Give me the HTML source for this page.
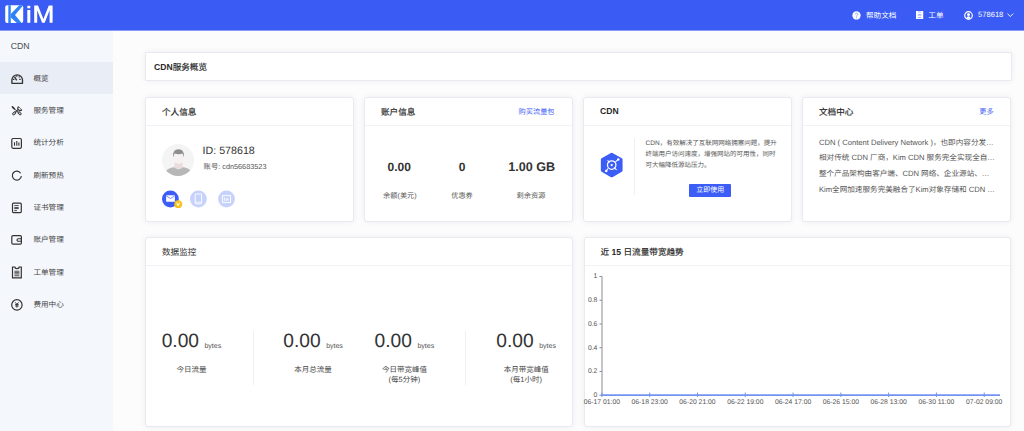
<!DOCTYPE html>
<html lang="zh-CN"><head><meta charset="utf-8">
<style>
*{margin:0;padding:0;box-sizing:border-box}
html,body{width:1024px;height:431px;overflow:hidden}
body{text-rendering:geometricPrecision;font-family:"Liberation Sans",sans-serif;background:#fcfcfd;position:relative;color:#333}
.abs{position:absolute}
.hdr{position:absolute;left:0;top:0;width:1024px;height:30px;background:#3a5cf4;box-shadow:0 1px 0 rgba(58,92,244,.6);z-index:5}
.side{position:absolute;left:0;top:30px;width:113px;height:401px;background:#f4f7fc}
.card{position:absolute;background:#fff;border:1px solid #e8eaf0;border-radius:3px;box-shadow:0 0 7px rgba(30,40,60,.06)}
.ct{position:absolute;left:16px;top:.5px;height:27px;line-height:27px;font-size:8.6px;font-weight:normal;-webkit-text-stroke:.18px #2a2a2a;color:#2a2a2a;white-space:nowrap}
.cdiv{position:absolute;left:0;right:0;top:26.8px;height:1px;background:#f0f2f6}
.mi{position:absolute;left:0;width:113px;height:32px}
.mi .t{position:absolute;left:33.4px;top:0.8px;line-height:32px;font-size:7.6px;color:#444;white-space:nowrap}
.mi svg{position:absolute;left:10px;top:9px}
.hw{color:#fff;font-size:7.6px;white-space:nowrap}
.doc{width:176px;font-size:7.6px;line-height:10px;color:#555;white-space:nowrap;overflow:hidden;text-overflow:ellipsis}
.big{text-align:center;white-space:nowrap;color:#333;line-height:22px}
.big .n{font-size:19.2px}
.big .u{font-size:7px;color:#555;margin-left:1px;position:relative;top:.4px}
.lab{text-align:center;font-size:7.5px;line-height:9.5px;color:#444;white-space:nowrap}
b{font-weight:bold;-webkit-text-stroke:0}
.link{color:#3d5cf5;font-size:7.2px}
</style></head><body>

<div class="hdr">
  <svg class="abs" style="left:0;top:0" width="60" height="30" viewBox="0 0 60 30">
    <rect x="5.2" y="5.2" width="18" height="17.8" rx="2" fill="#fff"/>
    <path d="M8.3 5.2h2.5v17.8h-2.5z" fill="#2e82f6"/>
    <path d="M10.8 14L19.2 5.2h4.1L15 15l6.6 8h-4.8l-6-5.6z" fill="#2e82f6"/>
    <rect x="27.3" y="5.8" width="3" height="2.5" fill="#fff"/>
    <rect x="27.3" y="10" width="3" height="12.8" fill="#fff"/>
    <path d="M34.2 22.8V5.5h3.8l5.4 13.6 5.4-13.6h3.8v17.3h-3V10.2l-4.9 12.6h-2.6l-4.9-12.6v12.6z" fill="#fff"/>
  </svg>
  <svg class="abs" style="left:851.7px;top:10.5px" width="9" height="9" viewBox="0 0 9 9"><circle cx="4.5" cy="4.45" r="4.15" fill="#fff"/><path d="M3.3 3.3a1.25 1.25 0 1 1 1.9 1.1c-.45.3-.65.5-.65.95v.25" stroke="#7d95f6" stroke-width=".9" fill="none"/><circle cx="4.55" cy="6.7" r=".5" fill="#7d95f6"/></svg>
  <div class="abs hw" style="left:866px;top:9.6px;line-height:12px">帮助文档</div>
  <svg class="abs" style="left:916px;top:10.8px" width="8" height="8" viewBox="0 0 8 8"><rect x="0" y="0" width="7.2" height="8" fill="#fff"/><rect x="1.8" y=".6" width="3.6" height=".7" fill="#8aa0f7"/><rect x="1.8" y="3.3" width="3.6" height="1.2" fill="#8aa0f7"/><rect x="1.8" y="5.9" width="3.6" height=".8" fill="#8aa0f7"/></svg>
  <div class="abs hw" style="left:928.3px;top:9.6px;line-height:12px">工单</div>
  <svg class="abs" style="left:963.5px;top:10.5px" width="9" height="9" viewBox="0 0 9 9"><circle cx="4.5" cy="4.5" r="3.8" stroke="#fff" stroke-width="1.2" fill="none"/><circle cx="4.5" cy="3.5" r="1.5" fill="#fff"/><path d="M2.2 7.8c.2-1.8 1.1-2.6 2.3-2.6s2.1.8 2.3 2.6z" fill="#fff"/></svg>
  <div class="abs hw" style="left:978px;top:8.6px;line-height:12px">578618</div>
  <svg class="abs" style="left:1007.3px;top:12.6px" width="8" height="5" viewBox="0 0 8 5"><path d="M.5.6L3.3 3.6 6.2.6" stroke="#fff" stroke-width=".9" fill="none"/></svg>
</div>

<div class="side">
  <div class="abs" style="left:10.8px;top:9.6px;font-size:8.7px;line-height:12px;color:#4a4a4a">CDN</div>
  <div class="abs" style="left:0;top:31.5px;width:102px;height:1px;background:#edf0f6"></div>
</div>
<div class="mi" style="top:62px;background:#e9edf6"></div>
<div class="mi" style="top:62.00px"><div class="t">概览</div></div>
<div class="mi" style="top:94.33px"><div class="t">服务管理</div></div>
<div class="mi" style="top:126.66px"><div class="t">统计分析</div></div>
<div class="mi" style="top:158.99px"><div class="t">刷新预热</div></div>
<div class="mi" style="top:191.32px"><div class="t">证书管理</div></div>
<div class="mi" style="top:223.65px"><div class="t">账户管理</div></div>
<div class="mi" style="top:255.98px"><div class="t">工单管理</div></div>
<div class="mi" style="top:288.31px"><div class="t">费用中心</div></div>
<svg class="abs" style="left:0;top:0" width="113" height="431" viewBox="0 0 113 431" fill="none" stroke="#333" stroke-width="1.2">
 <path d="M11.9 83.3V80.1a5.3 5.3 0 0 1 10.6 0v3.2z" stroke-width="1.35" stroke-linejoin="round"/>
 <path d="M16.8 75.3v1.5M12.9 79.3h1.5M19.2 79.3h1.5M19.6 76.4l-.9.9" stroke-width="1.2"/>
 <path d="M14.5 76.6l2.2 3.8" stroke-width="1.4"/>
 <path d="M12.4 106.9l2 2" stroke-width="1.6" stroke-linecap="round"/>
 <path d="M14.4 108.9l3.6 3.2" stroke-width=".9"/>
 <rect x="-.9" y="-1.7" width="1.8" height="3.4" rx=".5" transform="translate(19.6 113.3) rotate(-45)" stroke-width=".95"/>
 <rect x="-.9" y="-1.7" width="1.8" height="3.4" rx=".5" transform="translate(14.2 113.3) rotate(45)" stroke-width=".95"/>
 <path d="M15.6 111.9l2.6-2.6" stroke-width="1.1"/>
 <path d="M18.5 106.6a2.3 2.3 0 1 0 3.3 3.2" stroke-width="1.2"/>
 <path d="M18.5 106.6l1.2 1.6M21.8 109.8l-1.6-1.2" stroke-width="1"/>
 <rect x="11.8" y="138.5" width="9.6" height="9.8" rx="1.2"/>
 <path d="M14.5 142.3v3.5M16.8 141.1v4.7M18.9 142.5v3.3" stroke-width="1.1"/>
 <path d="M20.6 173.2A4.5 4.5 0 1 0 21.3 176" />
 <rect x="12.5" y="203.2" width="8.8" height="9.4" rx="1"/>
 <path d="M14.3 205.6h4.4M14.3 207.6h4.4M14.3 208.6h4.4M14.3 210.6h2.6" stroke-width=".9"/>
 <rect x="11.8" y="235.6" width="9.6" height="8.6" rx="1.2"/>
 <path d="M21.4 238.8h-3.2a1.2 1.2 0 0 0 0 2.4h3.2" stroke-width="1.1"/>
 <path d="M12.5 267h2.4a2.1 1.6 0 0 0 4.2 0h2.2v10.9h-8.8z"/>
 <path d="M14.4 271.2h5M14.4 272.7h5M14.4 274h5M14.4 275.8h5" stroke-width=".9"/>
 <circle cx="16.9" cy="304.9" r="5.2"/>
 <path d="M15.3 302.4l1.6 2 1.6-2M15.2 304.6h3.4M15.2 306h3.4M16.9 304.4v3.2" stroke-width="1"/>
</svg>



<!-- top card -->
<div class="card" style="left:145px;top:52px;width:867px;height:29px;border-radius:1px">
  <div class="abs" style="left:8px;top:.7px;line-height:27px;font-size:8.6px;font-weight:normal;-webkit-text-stroke:.18px #2a2a2a;color:#2a2a2a"><b>CDN</b>服务概览</div>
</div>

<!-- card 1 -->
<div class="card" style="left:145px;top:97px;width:209px;height:125px">
  <div class="ct">个人信息</div><div class="cdiv"></div>
  <div class="abs" style="left:16px;top:45.5px;width:32.4px;height:32.4px;border-radius:50%;background:#f4f4f4;overflow:hidden">
    <svg width="33" height="33" viewBox="0 0 33 33">
      <path d="M2 30.5c2.4-6 7-7.4 14.5-7.4s12.1 1.4 14.5 7.4v3H2z" fill="#b7b7b7"/>
      <path d="M12.4 18.5v4.8c1.2 1.4 2.6 2.1 4.1 2.1s2.9-.7 4.1-2.1v-4.8z" fill="#e8dcdc"/>
      <ellipse cx="16.5" cy="13.4" rx="5" ry="6.6" fill="#f7f0f0"/>
      <path d="M11.2 13.6c-.9-5.2 1.4-8.3 5.3-8.3s6.2 3.1 5.3 8.3c-.4-2.2-.9-3.4-1.5-4-1.7.7-5.1.7-7.6 0-.6.6-1.1 1.8-1.5 4z" fill="#8e8e8e"/>
    </svg>
  </div>
  <div class="abs" style="left:56.6px;top:46.6px;font-size:10.67px;line-height:12px;color:#333;white-space:nowrap">ID: 578618</div>
  <div class="abs" style="left:57.6px;top:64.3px;font-size:7.3px;line-height:10px;color:#555;white-space:nowrap">账号: cdn56683523</div>
  <svg class="abs" style="left:16px;top:91.6px" width="75" height="19" viewBox="0 0 75 19">
    <circle cx="8.4" cy="9" r="8.4" fill="#3c5ef6"/>
    <rect x="4.1" y="5.2" width="8.8" height="6.6" rx=".5" fill="#fff"/>
    <path d="M4.3 5.9l4.2 2.6 4.2-2.6" stroke="#3a5cf4" stroke-width=".7" fill="none"/>
    <circle cx="16.2" cy="14.2" r="3.9" fill="#f8c21a"/>
    <path d="M14.7 12.6l1.5 3.3 1.5-3.3" stroke="#fff" stroke-width="1" fill="none"/>
    <circle cx="36.4" cy="9" r="8.4" fill="#c7d2fb"/>
    <rect x="33.2" y="4" width="6.4" height="9.8" rx=".6" stroke="#fff" stroke-width=".9" fill="none"/>
    <path d="M33.2 12.2h6.4" stroke="#fff" stroke-width=".8"/>
    <circle cx="64.5" cy="9" r="8.4" fill="#c7d2fb"/>
    <rect x="60.4" y="5.6" width="8.2" height="6.9" stroke="#fff" stroke-width=".9" fill="none"/>
    <path d="M62.4 7.5v3.4M64.3 8.6v2.3M64.3 8.8h1.8v2.1" stroke="#fff" stroke-width=".9" fill="none"/>
  </svg>
</div>

<!-- card 2 -->
<div class="card" style="left:364px;top:97px;width:209px;height:125px">
  <div class="ct">账户信息</div><div class="cdiv"></div>
  <div class="abs link" style="left:153.6px;top:7.8px;line-height:12px">购买流量包</div>
    <div class="abs" style="left:16.7px;top:62px;width:35px;text-align:center;font-size:12px;font-weight:bold;line-height:14px;color:#333">0.00</div>
  <div class="abs" style="left:17.4px;top:93px;width:35px;text-align:center;font-size:7.2px;line-height:10px;color:#555;white-space:nowrap">余额(美元)</div>
  <div class="abs" style="left:86px;top:62px;width:22px;text-align:center;font-size:12px;font-weight:bold;line-height:14px;color:#333">0</div>
  <div class="abs" style="left:86px;top:93px;width:22px;text-align:center;font-size:7.2px;line-height:10px;color:#555;white-space:nowrap">优惠券</div>
  <div class="abs" style="left:142.6px;top:62px;width:48px;text-align:center;font-size:12.6px;font-weight:bold;line-height:14px;color:#333;white-space:nowrap">1.00 GB</div>
  <div class="abs" style="left:142px;top:93px;width:48px;text-align:center;font-size:7.2px;line-height:10px;color:#555;white-space:nowrap">剩余资源</div>
</div>

<!-- card 3 -->
<div class="card" style="left:583px;top:97px;width:209px;height:125px">
  <div class="ct" style="top:-.2px"><b>CDN</b></div><div class="cdiv"></div>
  <svg class="abs" style="left:15.8px;top:54.4px" width="25" height="27" viewBox="0 0 26 28">
    <polygon points="12.17,2.32 21.87,7.92 21.87,19.12 12.17,24.72 2.47,19.12 2.47,7.92" fill="#3c5ef6" stroke="#3c5ef6" stroke-width="3.2" stroke-linejoin="round"/>
    <circle cx="12.17" cy="13.52" r="4.4" stroke="#fff" stroke-width="1.3" fill="none"/>
    <circle cx="12.17" cy="13.52" r="1.2" fill="#fff"/>
    <path d="M19 7.7L16.1 10.2M8.2 17.1L6.5 19.8M7.8 8.6l2.3 2.2M14.4 16.1l2.9 2.4" stroke="#fff" stroke-width="1.1"/>
    <circle cx="19" cy="7.7" r="1.3" fill="#fff"/><circle cx="6.5" cy="19.8" r="1.3" fill="#fff"/>
  </svg>
  <div class="abs" style="left:49.6px;top:39.5px;width:1px;height:57px;background:#eef0f4"></div>
  <div class="abs" style="left:61.6px;top:40px;width:140px;font-size:6.5px;line-height:11.1px;color:#555;white-space:nowrap">CDN，有效解决了互联网网络拥塞问题，提升<br>终端用户访问速度，增强网站的可用性，同时<br>可大幅降低源站压力。</div>
  <div class="abs" style="left:105.3px;top:85.8px;width:42px;height:13px;background:#3c5ef6;border-radius:1px;color:#fff;font-size:7px;line-height:13px;text-align:center">立即使用</div>
</div>

<!-- card 4 -->
<div class="card" style="left:802px;top:97px;width:209px;height:125px">
  <div class="ct">文档中心</div><div class="cdiv"></div>
  <div class="abs link" style="left:176.2px;top:7.8px;line-height:12px">更多</div>
  <div class="abs doc" style="left:16px;top:39.5px">CDN ( Content Delivery Network )，也即内容分发网络</div>
  <div class="abs doc" style="left:16px;top:55.2px">相对传统 CDN 厂商，Kim CDN 服务完全实现全自动化</div>
  <div class="abs doc" style="left:16px;top:70.9px">整个产品架构由客户端、CDN 网络、企业源站、数据中心四大部分组成</div>
  <div class="abs doc" style="left:16px;top:86.6px">Kim全网加速服务完美融合了Kim对象存储和 CDN 服务</div>
</div>

<!-- row 2 card 1 -->
<div class="card" style="left:145px;top:237px;width:428px;height:190px">
  <div class="ct" style="-webkit-text-stroke:0;color:#333">数据监控</div><div class="cdiv"></div>
  <div class="abs" style="left:107px;top:93px;width:1px;height:54px;background:#eef0f4"></div>
  <div class="abs" style="left:319px;top:93px;width:1px;height:54px;background:#eef0f4"></div>
  <div class="abs big" style="left:-14.60px;top:93.2px;width:120px"><span class="n">0.00</span> <span class="u">bytes</span></div>
  <div class="abs lab" style="left:-14.60px;top:127px;width:120px">今日流量</div>
  <div class="abs big" style="left:107.10px;top:93.2px;width:120px"><span class="n">0.00</span> <span class="u">bytes</span></div>
  <div class="abs lab" style="left:107.10px;top:127px;width:120px">本月总流量</div>
  <div class="abs big" style="left:198.40px;top:93.2px;width:120px"><span class="n">0.00</span> <span class="u">bytes</span></div>
  <div class="abs lab" style="left:198.40px;top:127px;width:120px">今日带宽峰值<br>(每5分钟)</div>
  <div class="abs big" style="left:320.15px;top:93.2px;width:120px"><span class="n">0.00</span> <span class="u">bytes</span></div>
  <div class="abs lab" style="left:320.15px;top:127px;width:120px">本月带宽峰值<br>(每1小时)</div>
</div>

<!-- row 2 card 2 -->
<div class="card" style="left:583.6px;top:237px;width:427.4px;height:190px">
  <div class="ct">近 <b>15</b> 日流量带宽趋势</div><div class="cdiv"></div>
</div>
<svg class="abs" style="left:0;top:0" width="1024" height="431" viewBox="0 0 1024 431">
  <g stroke="#8a8c93" stroke-width="1" fill="none">
    <path d="M602 276.5V395.2"/>
    <path d="M599.5 276.50h2.5"/>
    <path d="M599.5 300.24h2.5"/>
    <path d="M599.5 323.98h2.5"/>
    <path d="M599.5 347.72h2.5"/>
    <path d="M599.5 371.46h2.5"/>
    <path d="M599.5 395.20h2.5"/>
  </g>
  <g font-family="Liberation Sans" font-size="6.8" fill="#555" text-anchor="end">
    <text x="597.4" y="278.30">1</text>
    <text x="597.4" y="302.04">0.8</text>
    <text x="597.4" y="325.78">0.6</text>
    <text x="597.4" y="349.52">0.4</text>
    <text x="597.4" y="373.26">0.2</text>
    <text x="597.4" y="397.00">0</text>
  </g>
  <path d="M602 395.2H1000" stroke="#7393f0" stroke-width="1.8"/>
  <g stroke="#7393f0" stroke-width="1">
    <path d="M601.90 392.5v4.5"/>
    <path d="M649.69 392.5v4.5"/>
    <path d="M697.48 392.5v4.5"/>
    <path d="M745.27 392.5v4.5"/>
    <path d="M793.06 392.5v4.5"/>
    <path d="M840.85 392.5v4.5"/>
    <path d="M888.64 392.5v4.5"/>
    <path d="M936.43 392.5v4.5"/>
    <path d="M984.22 392.5v4.5"/>
  </g>
  <g font-family="Liberation Sans" font-size="6.8" fill="#555" text-anchor="middle">
    <text x="601.90" y="404.2">06-17 01:00</text>
    <text x="649.69" y="404.2">06-18 23:00</text>
    <text x="697.48" y="404.2">06-20 21:00</text>
    <text x="745.27" y="404.2">06-22 19:00</text>
    <text x="793.06" y="404.2">06-24 17:00</text>
    <text x="840.85" y="404.2">06-26 15:00</text>
    <text x="888.64" y="404.2">06-28 13:00</text>
    <text x="936.43" y="404.2">06-30 11:00</text>
    <text x="984.22" y="404.2">07-02 09:00</text>
  </g>
</svg>
</body></html>
